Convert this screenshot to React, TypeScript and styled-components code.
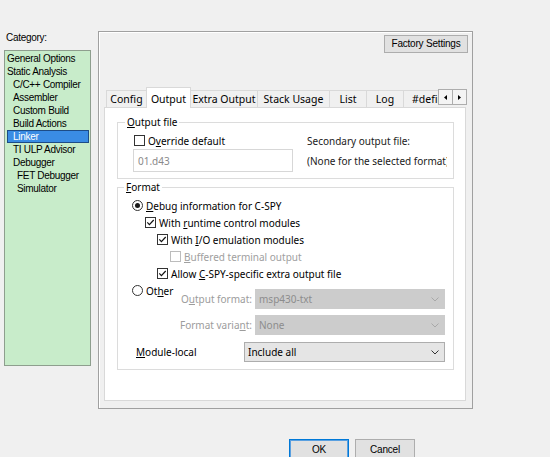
import styled, { createGlobalStyle } from "styled-components";
import { FC, ReactNode } from "react";

const GlobalStyle = createGlobalStyle`
  html, body {
    margin: 0;
    padding: 0;
    background: #f0f0f0;
  }
  body {
    font-family: "Noto Sans", "Open Sans", sans-serif;
    font-size: 10px;
    color: #000000;
  }
  u {
    text-underline-offset: 1px;
  }
`;

const Page = styled.div`
  width: 550px;
  height: 457px;
  overflow: hidden;
  box-sizing: border-box;
  padding: 31px 0 0 4px;
  display: flex;
  flex-direction: column;
`;

const Main = styled.div`
  display: flex;
  gap: 7px;
  align-items: flex-start;
`;

const Sidebar = styled.div`
  display: flex;
  flex-direction: column;
  width: 87px;
`;

const CategoryLabel = styled.div`
  font-family: "Liberation Sans", Arial, sans-serif;
  font-size: 10px;
  letter-spacing: -0.3px;
  line-height: 14px;
  padding-left: 2px;
  margin-bottom: 5px;
`;

const CategoryList = styled.ul`
  list-style: none;
  margin: 0;
  padding: 1px 1px 0 2px;
  height: 316px;
  box-sizing: border-box;
  background: #c8ecca;
  border: 1px solid #8e9e8e;
  font-family: "Liberation Sans", Arial, sans-serif;
  font-size: 10px;
  letter-spacing: -0.3px;
`;

const CategoryItem = styled.li<{ $level: number; $selected?: boolean }>`
  height: 13px;
  line-height: 13px;
  box-sizing: border-box;
  white-space: nowrap;
  padding-left: ${(p) => [0, 6, 10][p.$level]}px;
  background: ${(p) => (p.$selected ? "#3a8ce4" : "transparent")};
  color: ${(p) => (p.$selected ? "#ffffff" : "#000000")};
  box-shadow: ${(p) => (p.$selected ? "inset 0 0 0 1px #1d4c86" : "none")};
`;

const Frame = styled.div`
  width: 375px;
  height: 378px;
  box-sizing: border-box;
  border: 1px solid #a0a0a0;
  box-shadow: inset 1px 1px 0 #ffffff;
  padding: 3px 4px 7px 5px;
  display: flex;
  flex-direction: column;
`;

const FrameHeader = styled.div`
  display: flex;
  justify-content: flex-end;
`;

const PushButton = styled.button<{ $width: number; $default?: boolean }>`
  width: ${(p) => p.$width}px;
  height: ${(p) => (p.$default !== undefined ? 21 : 18)}px;
  box-sizing: border-box;
  margin: 0;
  padding: 0;
  background: #e1e1e1;
  border: 1px solid ${(p) => (p.$default ? "#0078d7" : "#adadad")};
  box-shadow: ${(p) => (p.$default ? "inset 0 0 0 1px #5aa0e0" : "none")};
  font-family: "Liberation Sans", Arial, sans-serif;
  font-size: 10px;
  letter-spacing: -0.2px;
  color: #000000;
  line-height: 16px;
`;

const TabRow = styled.div`
  display: flex;
  align-items: flex-end;
  height: 21px;
  margin: 34px 1px -1px 0;
  padding-left: 2px;
  position: relative;
  z-index: 1;
`;

const TabStrip = styled.div`
  flex: 1;
  display: flex;
  align-items: flex-end;
  height: 100%;
  overflow: hidden;
`;

const Tab = styled.div<{ $width: number; $active?: boolean }>`
  flex-shrink: 0;
  width: ${(p) => p.$width}px;
  height: ${(p) => (p.$active ? 21 : 17)}px;
  margin-bottom: ${(p) => (p.$active ? 0 : 1)}px;
  box-sizing: border-box;
  border: 1px solid #d9d9d9;
  border-bottom: none;
  background: ${(p) => (p.$active ? "#ffffff" : "#f0f0f0")};
  position: relative;
  z-index: ${(p) => (p.$active ? 2 : 1)};
  padding: ${(p) => (p.$active ? "1px 0 0 0" : "0")};
  display: flex;
  align-items: center;
  justify-content: center;
  font-size: 10.5px;
  white-space: nowrap;
  & + & {
    margin-left: -1px;
  }
`;

const ArrowPair = styled.div`
  display: flex;
  margin-bottom: 3px;
`;

const ArrowButton = styled.div`
  width: 15px;
  height: 16px;
  box-sizing: border-box;
  border: 1px solid #adadad;
  background: #f4f4f4;
  display: flex;
  align-items: center;
  justify-content: center;
  & + & {
    margin-left: -1px;
  }
`;

const TabPage = styled.div`
  flex: 1;
  margin-right: 2px;
  background: #ffffff;
  border: 1px solid #d9d9d9;
  padding-top: 7px;
  display: flex;
  flex-direction: column;
`;

const Group = styled.fieldset<{ $pad: string }>`
  margin: 0 11px 0 12px;
  border: 1px solid #dcdcdc;
  padding: ${(p) => p.$pad};
  min-width: 0;
  & + & {
    margin-top: 1px;
  }
`;

const GroupTitle = styled.legend`
  padding: 0 2px;
  margin-left: -8px;
  line-height: 14px;
`;

const OutputGrid = styled.div`
  display: grid;
  grid-template-columns: 160px 1fr;
  grid-template-rows: 17px 23px;
  column-gap: 14px;
  align-items: center;
`;

const ClipText = styled.div`
  white-space: nowrap;
  overflow: hidden;
  color: #1a1a1a;
`;

const TextBox = styled.div`
  height: 23px;
  box-sizing: border-box;
  border: 1px solid #d7d7d7;
  padding-left: 4px;
  display: flex;
  align-items: center;
  color: #8a8a8a;
`;

const OptionRow = styled.label<{ $indent?: number; $disabled?: boolean }>`
  display: flex;
  align-items: center;
  gap: 3px;
  height: 17px;
  padding-left: ${(p) => p.$indent ?? 0}px;
  white-space: nowrap;
  color: ${(p) => (p.$disabled ? "#a0a0a0" : "#000000")};
`;

const Box = styled.span<{ $disabled?: boolean }>`
  width: 11px;
  height: 11px;
  box-sizing: border-box;
  border: 1px solid ${(p) => (p.$disabled ? "#bcbcbc" : "#333333")};
  background: #ffffff;
  display: flex;
  align-items: center;
  justify-content: center;
  flex-shrink: 0;
`;

const Circle = styled.span`
  width: 11px;
  height: 11px;
  box-sizing: border-box;
  border: 1px solid #333333;
  border-radius: 50%;
  background: #ffffff;
  display: flex;
  align-items: center;
  justify-content: center;
  flex-shrink: 0;
`;

const Dot = styled.span`
  width: 5px;
  height: 5px;
  border-radius: 50%;
  background: #1a1a1a;
`;

const OtherBlock = styled.div`
  display: flex;
  align-items: flex-start;
  justify-content: space-between;
`;

const FormatGrid = styled.div`
  display: grid;
  grid-template-columns: auto 190px;
  column-gap: 3px;
  row-gap: 6px;
  align-items: center;
  margin-top: 7px;
`;

const FieldLabel = styled.span<{ $disabled?: boolean }>`
  justify-self: end;
  white-space: nowrap;
  color: ${(p) => (p.$disabled ? "#9c9c9c" : "#000000")};
`;

const ModuleRow = styled.div`
  display: flex;
  align-items: center;
  justify-content: space-between;
  margin-top: 7px;
  padding-left: 4px;
`;

const Combo = styled.div<{ $width: number; $disabled?: boolean }>`
  width: ${(p) => p.$width}px;
  height: 20px;
  box-sizing: border-box;
  border: 1px solid ${(p) => (p.$disabled ? "#cccccc" : "#adadad")};
  background: ${(p) => (p.$disabled ? "#cccccc" : "#e5e5e5")};
  color: ${(p) => (p.$disabled ? "#8c8c8c" : "#000000")};
  padding: 0 5px 0 3px;
  display: flex;
  align-items: center;
  justify-content: space-between;
`;

const ButtonRow = styled.div`
  display: flex;
  gap: 6px;
  margin-top: 30px;
  padding-left: 285px;
`;

const Check: FC = () => (
  <svg width="9" height="9" viewBox="0 0 9 9">
    <polyline points="1.3,4.4 3.4,6.6 7.7,2" fill="none" stroke="#111" strokeWidth="1.2" />
  </svg>
);

const Chevron: FC<{ color: string }> = ({ color }) => (
  <svg width="8" height="5" viewBox="0 0 8 5">
    <polyline points="0.5,0.5 4,4 7.5,0.5" fill="none" stroke={color} strokeWidth="1" />
  </svg>
);

const Triangle: FC<{ dir: "left" | "right" }> = ({ dir }) => (
  <svg width="3" height="5" viewBox="0 0 3 5">
    <polygon points={dir === "left" ? "3,0 0,2.5 3,5" : "0,0 3,2.5 0,5"} fill="#000" />
  </svg>
);

const CheckOption: FC<{ indent: number; checked?: boolean; disabled?: boolean; children: ReactNode }> = ({
  indent,
  checked,
  disabled,
  children,
}) => (
  <OptionRow $indent={indent} $disabled={disabled}>
    <Box $disabled={disabled}>{checked && <Check />}</Box>
    <span>{children}</span>
  </OptionRow>
);

const RadioOption: FC<{ checked?: boolean; children: ReactNode }> = ({ checked, children }) => (
  <OptionRow>
    <Circle>{checked && <Dot />}</Circle>
    <span>{children}</span>
  </OptionRow>
);

const categories: { name: string; level: number }[] = [
  { name: "General Options", level: 0 },
  { name: "Static Analysis", level: 0 },
  { name: "C/C++ Compiler", level: 1 },
  { name: "Assembler", level: 1 },
  { name: "Custom Build", level: 1 },
  { name: "Build Actions", level: 1 },
  { name: "Linker", level: 1 },
  { name: "TI ULP Advisor", level: 1 },
  { name: "Debugger", level: 1 },
  { name: "FET Debugger", level: 2 },
  { name: "Simulator", level: 2 },
];

const tabs = [
  { name: "Config", width: 41 },
  { name: "Output", width: 45 },
  { name: "Extra Output", width: 68 },
  { name: "Stack Usage", width: 73 },
  { name: "List", width: 38 },
  { name: "Log", width: 38 },
  { name: "#define", width: 56 },
];

export default function App() {
  return (
    <Page>
      <GlobalStyle />
      <Main>
        <Sidebar>
          <CategoryLabel>Category:</CategoryLabel>
          <CategoryList>
            {categories.map((c) => (
              <CategoryItem key={c.name} $level={c.level} $selected={c.name === "Linker"}>
                {c.name}
              </CategoryItem>
            ))}
          </CategoryList>
        </Sidebar>

        <Frame>
          <FrameHeader>
            <PushButton $width={84}>Factory Settings</PushButton>
          </FrameHeader>

          <TabRow>
            <TabStrip>
              {tabs.map((t) => (
                <Tab key={t.name} $width={t.width} $active={t.name === "Output"}>
                  {t.name}
                </Tab>
              ))}
            </TabStrip>
            <ArrowPair>
              <ArrowButton>
                <Triangle dir="left" />
              </ArrowButton>
              <ArrowButton>
                <Triangle dir="right" />
              </ArrowButton>
            </ArrowPair>
          </TabRow>

          <TabPage>
            <Group $pad="3px 6px 6px 15px">
              <GroupTitle>
                <u>O</u>utput file
              </GroupTitle>
              <OutputGrid>
                <CheckOption indent={1}>
                  O<u>v</u>erride default
                </CheckOption>
                <ClipText>Secondary output file:</ClipText>
                <TextBox>01.d43</TextBox>
                <ClipText>(None for the selected format)</ClipText>
              </OutputGrid>
            </Group>

            <Group $pad="3px 8px 7px 14px">
              <GroupTitle>
                <u>F</u>ormat
              </GroupTitle>
              <RadioOption checked>
                <u>D</u>ebug information for C-SPY
              </RadioOption>
              <CheckOption indent={13} checked>
                With <u>r</u>untime control modules
              </CheckOption>
              <CheckOption indent={25} checked>
                With <u>I</u>/O emulation modules
              </CheckOption>
              <CheckOption indent={38} disabled>
                <u>B</u>uffered terminal output
              </CheckOption>
              <CheckOption indent={25} checked>
                Allow <u>C</u>-SPY-specific extra output file
              </CheckOption>
              <OtherBlock>
                <RadioOption>
                  Ot<u>h</u>er
                </RadioOption>
                <FormatGrid>
                  <FieldLabel $disabled>
                    O<u>u</u>tput format:
                  </FieldLabel>
                  <Combo $width={190} $disabled>
                    <span>msp430-txt</span>
                    <Chevron color="#a8a8a8" />
                  </Combo>
                  <FieldLabel $disabled>
                    Format varia<u>n</u>t:
                  </FieldLabel>
                  <Combo $width={190} $disabled>
                    <span>None</span>
                    <Chevron color="#a8a8a8" />
                  </Combo>
                </FormatGrid>
              </OtherBlock>
              <ModuleRow>
                <FieldLabel>
                  <u>M</u>odule-local
                </FieldLabel>
                <Combo $width={201}>
                  <span>Include all</span>
                  <Chevron color="#333" />
                </Combo>
              </ModuleRow>
            </Group>
          </TabPage>
        </Frame>
      </Main>

      <ButtonRow>
        <PushButton $width={60} $default>
          OK
        </PushButton>
        <PushButton $width={60} $default={false}>
          Cancel
        </PushButton>
      </ButtonRow>
    </Page>
  );
}
